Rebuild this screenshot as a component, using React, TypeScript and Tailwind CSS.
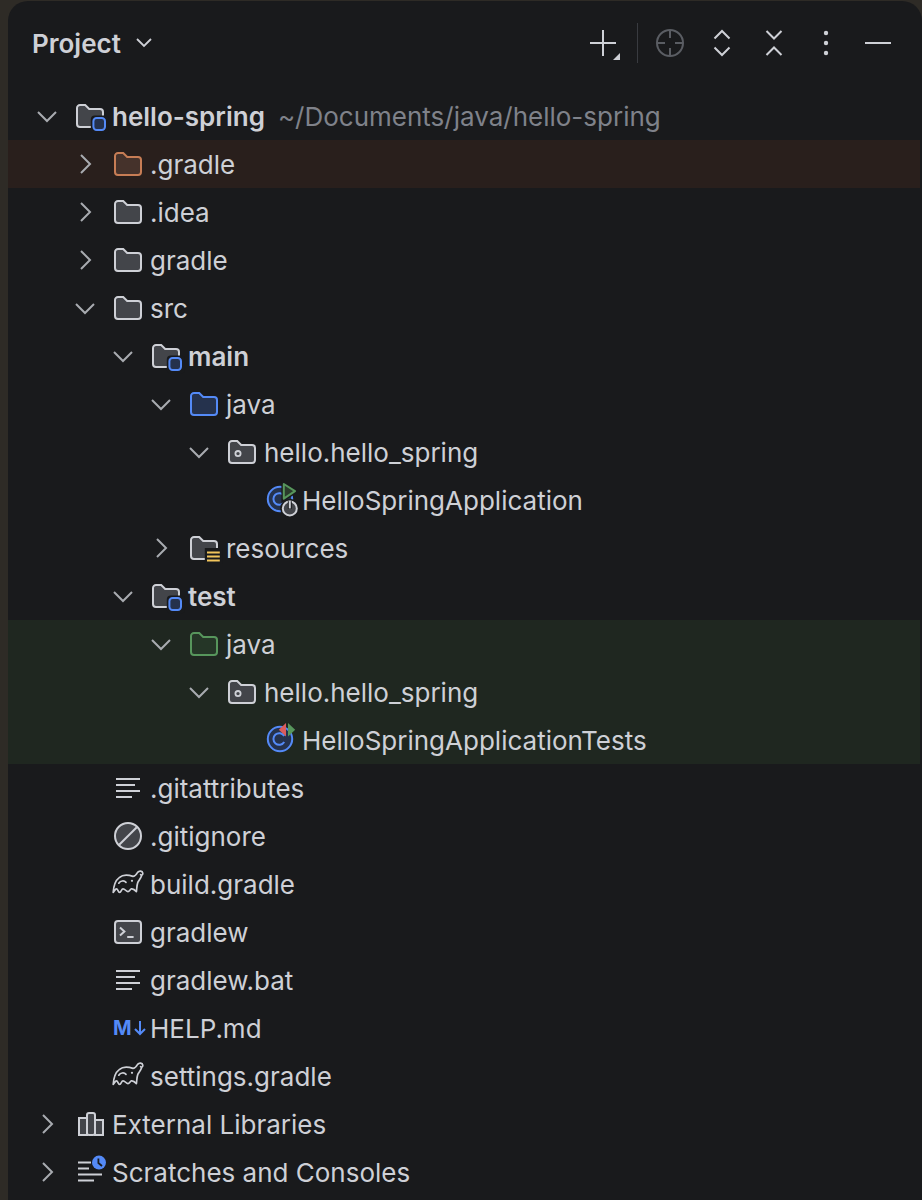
import type { ReactNode } from "react";

const LEVEL_PADDING = ["pl-[23px]", "pl-[61px]", "pl-[99px]", "pl-[137px]", "pl-[175px]", "pl-[213px]"];

const PANEL = "#191a1c";
const STROKE = "#ced0d6";

const FOLDER_PATH =
  "M3 2.5H5.6L7.6 4.5H13A1.5 1.5 0 0 1 14.5 6V12A1.5 1.5 0 0 1 13 13.5H3A1.5 1.5 0 0 1 1.5 12V4A1.5 1.5 0 0 1 3 2.5Z";

function Svg({ children }: { children: ReactNode }) {
  return (
    <svg width="32" height="32" viewBox="0 0 16 16" fill="none" className="shrink-0 overflow-visible">
      {children}
    </svg>
  );
}

function Folder({ stroke = STROKE, fill = "#43454a" }: { stroke?: string; fill?: string }) {
  return (
    <Svg>
      <path d={FOLDER_PATH} fill={fill} stroke={stroke} />
    </Svg>
  );
}

function ModuleFolder() {
  return (
    <Svg>
      <path d={FOLDER_PATH} fill="#43454a" stroke={STROKE} />
      <rect x="8.4" y="7.7" width="9" height="9" rx="2" fill={PANEL} />
      <rect x="9.7" y="9" width="5.8" height="6" rx="1.6" fill="#25324d" stroke="#548af7" />
    </Svg>
  );
}

function ResourcesFolder() {
  return (
    <Svg>
      <path d={FOLDER_PATH} fill="#43454a" stroke={STROKE} />
      <rect x="8.4" y="8" width="9" height="8" fill={PANEL} />
      <path d="M9.5 10.2H15.9M9.5 12.2H15.9M9.5 14.2H15.9" stroke="#f2c55c" strokeWidth="1" />
    </Svg>
  );
}

function PackageFolder() {
  return (
    <Svg>
      <path d={FOLDER_PATH} fill="#43454a" stroke={STROKE} />
      <circle cx="6" cy="8.8" r="1.3" stroke={STROKE} strokeWidth="0.9" />
    </Svg>
  );
}

function ClassRun() {
  return (
    <Svg>
      <circle cx="8" cy="7.5" r="6.1" fill="#25324d" stroke="#548af7" />
      <path d="M10.1 6A2.9 2.9 0 1 0 10.1 9" stroke="#548af7" />
      <path d="M9.9 0 15.5 3.6 9.9 7.3Z" fill={PANEL} stroke={PANEL} strokeWidth="2.4" />
      <path d="M9.9 0 15.5 3.6 9.9 7.3Z" fill="#2b3b2c" stroke="#57965c" strokeLinejoin="round" />
      <circle cx="12.9" cy="12.2" r="4.8" fill={PANEL} />
      <circle cx="12.9" cy="12.2" r="3.5" fill="#43454a" stroke={STROKE} />
      <path d="M12.9 8.6V12.4" stroke={PANEL} strokeWidth="2" />
      <path d="M12.9 8.4V12.2" stroke={STROKE} />
    </Svg>
  );
}

function ClassTest() {
  return (
    <Svg>
      <circle cx="8" cy="7.5" r="6.1" fill="#25324d" stroke="#548af7" />
      <path d="M10.1 6A2.9 2.9 0 1 0 10.1 9" stroke="#548af7" />
      <path d="M11 -0.5V6.2L7.4 2.9Z" fill="#db5c5c" />
      <path d="M12 -0.5V6.2L15.6 2.9Z" fill="#57965c" />
    </Svg>
  );
}

function TextFile() {
  return (
    <Svg>
      <path d="M2 3.5H14M2 6.5H11.5M2 9.5H14M2 12.5H10" stroke={STROKE} />
    </Svg>
  );
}

function Ignored() {
  return (
    <Svg>
      <circle cx="8" cy="8" r="6.5" fill="#43454a" stroke={STROKE} />
      <path d="M3.6 12.4 12.4 3.6" stroke={STROKE} />
    </Svg>
  );
}

function Gradle() {
  return (
    <Svg>
      <path
        d="M0.6 12.2C0.8 9 2 6 3.6 4.8C5 3.6 7.5 3.2 10.5 4.2C11.6 4.2 12.2 3.2 12.8 2.2C13.6 1.2 15.2 1.3 15.4 2.6C15.5 3.4 14.8 3.8 14.3 3.3M14.9 3.6C14.4 5.2 13.4 6.2 12.9 7.2C12.4 8.5 12.4 10.5 12.2 11.8C11.5 11 10.6 10.3 9.8 10.4C9 10.6 8.8 11.8 8 11.8C7 11.8 6.6 10.4 5.5 10.4C4.7 10.4 4.6 12.2 3.8 12.2C3 12.2 3 10.4 2.2 10.4C1.6 10.4 1.2 11.6 0.6 12.2"
        stroke={STROKE}
        strokeWidth="0.85"
        strokeLinejoin="round"
        strokeLinecap="round"
      />
      <path d="M3.4 7.6C4.2 6.4 6 6 7 7.2" stroke={STROKE} strokeWidth="0.85" strokeLinecap="round" />
      <circle cx="10" cy="6.4" r="0.55" fill={STROKE} />
    </Svg>
  );
}

function Terminal() {
  return (
    <Svg>
      <rect x="1.5" y="2.5" width="13" height="11" rx="1.5" fill="#43454a" stroke={STROKE} />
      <path d="M4 5.8 6.2 7.8 4 9.8" stroke={STROKE} />
      <path d="M7.6 10.5H10.8" stroke={STROKE} />
    </Svg>
  );
}

function Markdown() {
  return (
    <span className="flex h-8 w-8 shrink-0 items-center">
      <span className="ml-[1px] text-[20px] leading-none font-bold text-[#548af7]">M</span>
      <svg width="12" height="16" viewBox="0 0 12 16" fill="none" className="ml-[2px] shrink-0">
        <path d="M6 1V14M1 9 6 14 11 9" stroke="#548af7" strokeWidth="2" />
      </svg>
    </span>
  );
}

function Libraries() {
  return (
    <Svg>
      <rect x="2.5" y="5" width="4" height="8.5" fill="#43454a" stroke={STROKE} />
      <rect x="6.5" y="2.5" width="4" height="11" rx="1" fill="#43454a" stroke={STROKE} />
      <rect x="10.5" y="6" width="4" height="7.5" fill="#43454a" stroke={STROKE} />
    </Svg>
  );
}

function Scratches() {
  return (
    <Svg>
      <path d="M2 3.2H8.5M2 6.2H7.5M2 9.2H14M2 12.2H10" stroke={STROKE} />
      <circle cx="12.5" cy="3.3" r="3.5" fill="#548af7" />
      <path d="M12.2 1.2V3.5L14 5" stroke={PANEL} strokeWidth="0.9" />
    </Svg>
  );
}

function Chevron({ open }: { open: boolean }) {
  return (
    <span className="flex h-8 w-8 shrink-0 items-center justify-center">
      <svg width="32" height="32" viewBox="0 0 16 16" fill="none">
        <path d={open ? "M3.5 6 8 10.5 12.5 6" : "M6 3.5 10.5 8 6 12.5"} stroke="#a8abb0" strokeWidth="1" />
      </svg>
    </span>
  );
}

type Row = {
  level: number;
  name: string;
  icon: ReactNode;
  arrow?: "open" | "closed";
  bold?: boolean;
  hint?: string;
  band?: string;
};

const ROWS: Row[] = [
  { level: 0, name: "hello-spring", icon: <ModuleFolder />, arrow: "open", bold: true, hint: "~/Documents/java/hello-spring" },
  { level: 1, name: ".gradle", icon: <Folder stroke="#c77d55" fill="#45322b" />, arrow: "closed", band: "bg-[#291f1c]" },
  { level: 1, name: ".idea", icon: <Folder />, arrow: "closed" },
  { level: 1, name: "gradle", icon: <Folder />, arrow: "closed" },
  { level: 1, name: "src", icon: <Folder />, arrow: "open" },
  { level: 2, name: "main", icon: <ModuleFolder />, arrow: "open", bold: true },
  { level: 3, name: "java", icon: <Folder stroke="#548af7" fill="#25324d" />, arrow: "open" },
  { level: 4, name: "hello.hello_spring", icon: <PackageFolder />, arrow: "open" },
  { level: 5, name: "HelloSpringApplication", icon: <ClassRun /> },
  { level: 3, name: "resources", icon: <ResourcesFolder />, arrow: "closed" },
  { level: 2, name: "test", icon: <ModuleFolder />, arrow: "open", bold: true },
  { level: 3, name: "java", icon: <Folder stroke="#57965c" fill="#253627" />, arrow: "open", band: "bg-[#1f2720]" },
  { level: 4, name: "hello.hello_spring", icon: <PackageFolder />, arrow: "open", band: "bg-[#1f2720]" },
  { level: 5, name: "HelloSpringApplicationTests", icon: <ClassTest />, band: "bg-[#1f2720]" },
  { level: 1, name: ".gitattributes", icon: <TextFile /> },
  { level: 1, name: ".gitignore", icon: <Ignored /> },
  { level: 1, name: "build.gradle", icon: <Gradle /> },
  { level: 1, name: "gradlew", icon: <Terminal /> },
  { level: 1, name: "gradlew.bat", icon: <TextFile /> },
  { level: 1, name: "HELP.md", icon: <Markdown /> },
  { level: 1, name: "settings.gradle", icon: <Gradle /> },
  { level: 0, name: "External Libraries", icon: <Libraries />, arrow: "closed" },
  { level: 0, name: "Scratches and Consoles", icon: <Scratches />, arrow: "closed" },
];

function TreeRow({ row }: { row: Row }) {
  return (
    <div className={`mr-[2px] flex h-12 items-center ${LEVEL_PADDING[row.level]} ${row.band ?? ""}`}>
      {row.arrow ? <Chevron open={row.arrow === "open"} /> : <span className="w-8 shrink-0" />}
      <span className="ml-[11px] flex w-8 shrink-0 items-center">{row.icon}</span>
      <span className={`ml-[6px] whitespace-nowrap text-[#ced0d6] ${row.bold ? "font-semibold" : ""}`}>{row.name}</span>
      {row.hint && <span className="ml-[13px] whitespace-nowrap text-[#7f828a]">{row.hint}</span>}
    </div>
  );
}

function ToolButton({ children }: { children: ReactNode }) {
  return <div className="flex h-8 w-[52px] items-center justify-center">{children}</div>;
}

function Toolbar() {
  return (
    <div className="flex items-center pr-[18px]">
      <ToolButton>
        <svg width="32" height="32" viewBox="0 0 32 32" fill="none" className="overflow-visible">
          <path d="M16 3V29M3 16H29" stroke={STROKE} strokeWidth="2" />
          <path d="M33 26V33H26Z" fill={STROKE} />
        </svg>
      </ToolButton>
      <div className="mr-[6px] ml-2 h-10 w-px bg-[#393b40]" />
      <ToolButton>
        <svg width="32" height="32" viewBox="0 0 32 32" fill="none">
          <circle cx="16" cy="16" r="13" stroke="#5a5d63" strokeWidth="2" />
          <path d="M16 3V11M16 21V29M3 16H11M21 16H29" stroke="#5a5d63" strokeWidth="2" />
        </svg>
      </ToolButton>
      <ToolButton>
        <svg width="32" height="32" viewBox="0 0 32 32" fill="none">
          <path d="M8.5 11.5 16 4 23.5 11.5M8.5 20.5 16 28 23.5 20.5" stroke={STROKE} strokeWidth="2" />
        </svg>
      </ToolButton>
      <ToolButton>
        <svg width="32" height="32" viewBox="0 0 32 32" fill="none">
          <path d="M8.5 4 16 11.5 23.5 4M8.5 28 16 20.5 23.5 28" stroke={STROKE} strokeWidth="2" />
        </svg>
      </ToolButton>
      <ToolButton>
        <svg width="32" height="32" viewBox="0 0 32 32" fill="none">
          <circle cx="16" cy="6" r="2.2" fill={STROKE} />
          <circle cx="16" cy="16" r="2.2" fill={STROKE} />
          <circle cx="16" cy="26" r="2.2" fill={STROKE} />
        </svg>
      </ToolButton>
      <ToolButton>
        <svg width="32" height="32" viewBox="0 0 32 32" fill="none">
          <path d="M3 16H29" stroke={STROKE} strokeWidth="2" />
        </svg>
      </ToolButton>
    </div>
  );
}

export default function App() {
  return (
    <div className="h-[1200px] overflow-hidden bg-[#2e2b26] pt-px pl-2 font-['Inter',sans-serif] text-[26px]">
      <div className="h-full rounded-t-[20px] bg-[#191a1c]">
        <header className="flex h-[84px] items-center justify-between pl-6">
          <div className="flex items-center">
            <span className="font-semibold text-[#ced0d6]">Project</span>
            <svg width="24" height="24" viewBox="0 0 24 24" fill="none" className="ml-[11px]">
              <path d="M5 8 12 15 19 8" stroke={STROKE} strokeWidth="1.8" />
            </svg>
          </div>
          <Toolbar />
        </header>
        <div className="mt-[7px]">
          {ROWS.map((row, i) => (
            <TreeRow key={i} row={row} />
          ))}
        </div>
      </div>
    </div>
  );
}
